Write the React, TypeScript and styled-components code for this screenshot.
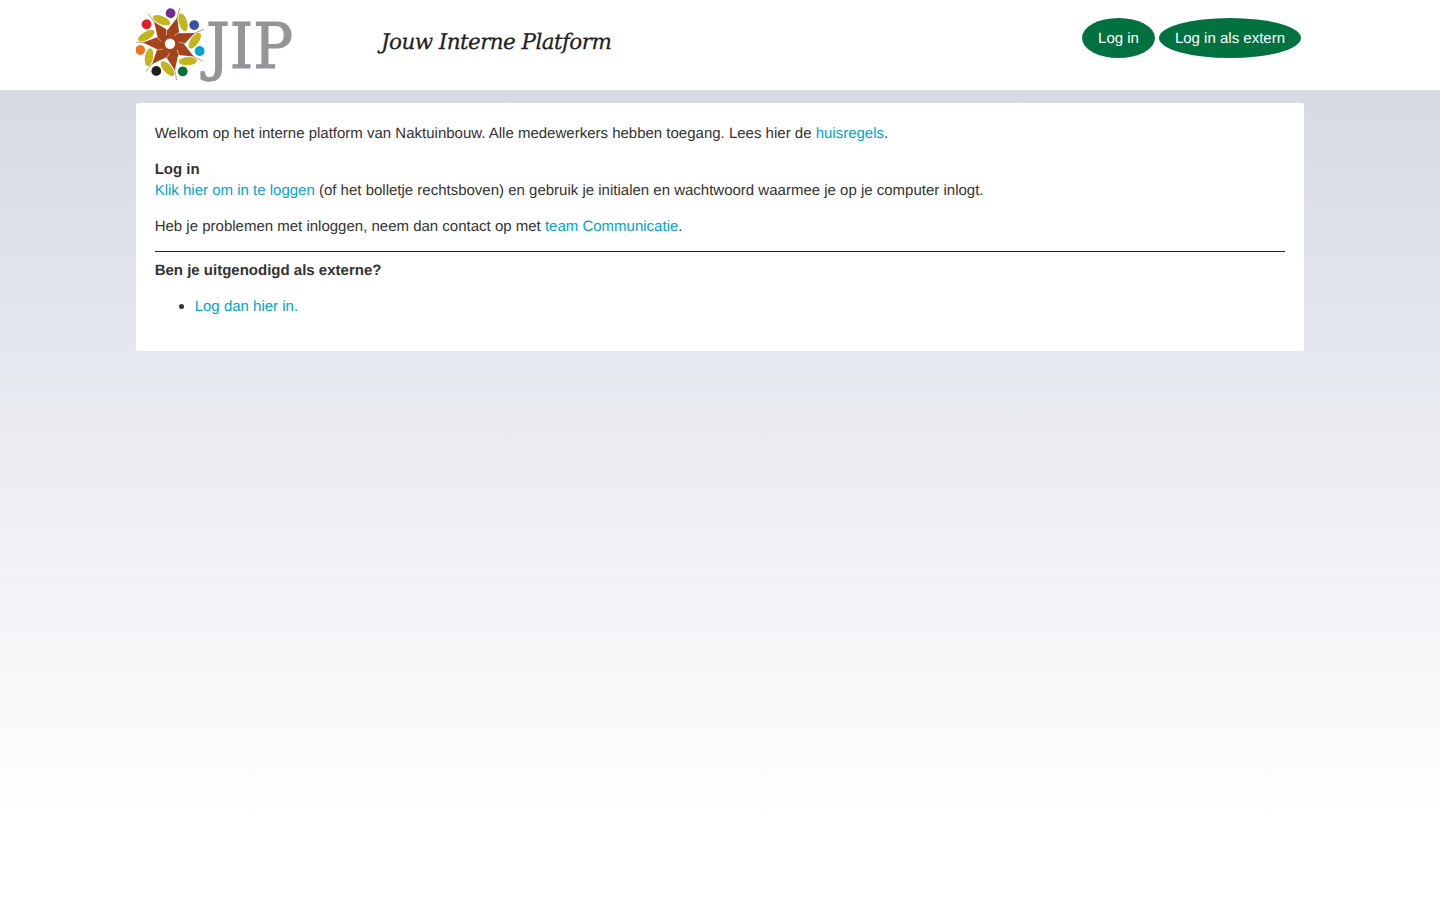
import React from "react";
import styled, { createGlobalStyle } from "styled-components";

const GlobalStyle = createGlobalStyle`
  html, body {
    margin: 0;
    min-height: 100%;
  }
  body {
    font-family: "Liberation Sans", Arial, sans-serif;
    font-size: 15px;
    line-height: 21px;
    color: #333333;
    background: #ffffff;
    text-rendering: geometricPrecision;
  }
`;

const Page = styled.div`
  height: 900px;
  overflow: hidden;
  background: linear-gradient(180deg, #d6dae4 90px, #ffffff 820px);
`;

const Header = styled.header`
  height: 90px;
  background: #ffffff;
`;

const HeaderInner = styled.div`
  width: 1168px;
  margin: 0 auto;
  display: flex;
  align-items: flex-start;
`;

const LogoMark = styled.svg`
  display: block;
  width: 175px;
  height: 90px;
  flex: none;
`;

const Tagline = styled.div`
  margin: 28px 0 0 70px;
  font-family: "DejaVu Serif", Georgia, serif;
  font-style: italic;
  font-size: 21.5px;
  line-height: 30px;
  color: #222222;
  letter-spacing: -0.58px;
  -webkit-text-stroke: 0.25px #222222;
  flex: 1;
`;

const ButtonRow = styled.div`
  display: flex;
  gap: 4px;
  margin: 18px 3px 0 0;
`;

const PillButton = styled.a`
  display: block;
  height: 40px;
  padding: 0 16px;
  line-height: 42px;
  border-radius: 50%;
  background: #027140;
  color: #ffffff;
  text-decoration: none;
`;

const Card = styled.main`
  box-sizing: border-box;
  width: 1168px;
  height: 248px;
  margin: 13px auto 0;
  padding: 20px 19px 0 18.7px;
  background: #ffffff;
  border-radius: 3px;
  box-shadow: 0 0 1px rgba(255, 255, 255, 0.6);
`;

const Para = styled.p`
  margin: 0 0 15px;
`;

const TextLink = styled.a`
  color: #00a5cf;
  text-decoration: none;
`;

const Rule = styled.hr`
  margin: -1px 0 8px;
  border: 0;
  border-top: 1px solid #222222;
`;

const List = styled.ul`
  margin: -1px 0 0;
  padding-left: 40px;
  text-rendering: auto;

  ${TextLink} {
    text-rendering: geometricPrecision;
  }
`;

const CX = 170;
const CY = 43.7;
const STEP = 360 / 7;
const rays = [0, 1, 2, 3, 4, 5, 6];
const dotColors = ["#6f2c91", "#3953a4", "#00a5cf", "#027140", "#231f20", "#ee7623", "#e21c2a"];

// seven-pointed star, outer and inner points in turn
const starPoints = Array.from({ length: 14 }, (_, i) => {
  const r = i % 2 === 0 ? 27 : 14;
  const a = ((-36 + (i * STEP) / 2) * Math.PI) / 180;
  return `${(CX + r * Math.sin(a)).toFixed(1)},${(CY - r * Math.cos(a)).toFixed(1)}`;
}).join(" ");

function Logo() {
  return (
    <LogoMark viewBox="136 0 175 90">
      {rays.map((i) => (
        <g key={i} transform={`rotate(${-36 + i * STEP} ${CX} ${CY})`}>
          <line x1={CX} y1={CY - 24} x2={CX} y2={CY - 37} stroke="#c58b70" strokeWidth="0.8" />
        </g>
      ))}
      <polygon points={starPoints} fill="#a5431a" />
      {rays.map((i) => (
        <g key={i} transform={`rotate(${-36 + i * STEP} ${CX} ${CY})`}>
          <line x1={CX + 2} y1={CY - 9} x2={CX + 7} y2={CY - 15} stroke="#ffffff" strokeWidth="0.7" opacity="0.7" />
        </g>
      ))}
      <circle cx={CX} cy={CY} r="5.2" fill="#ffffff" />
      {rays.map((i) => (
        <g key={i} transform={`rotate(${-20 + i * STEP} ${CX} ${CY})`}>
          <ellipse
            cx={CX}
            cy={CY - 25}
            rx="9.2"
            ry="4.1"
            fill="#c4b51f"
            transform={`rotate(42 ${CX} ${CY - 25})`}
          />
        </g>
      ))}
      {dotColors.map((c, i) => (
        <circle key={c} cx={CX} cy={CY - 30.5} r="4.9" fill={c} transform={`rotate(${1 + i * STEP} ${CX} ${CY})`} />
      ))}
      <text
        x="206"
        y="68"
        fontFamily="'DejaVu Serif', serif"
        fontSize="63"
        fill="#939598"
        stroke="#939598"
        strokeWidth="1.2"
        textLength="87"
        lengthAdjust="spacingAndGlyphs"
      >
        JIP
      </text>
    </LogoMark>
  );
}

export default function App() {
  return (
    <Page>
      <GlobalStyle />
      <Header>
        <HeaderInner>
          <Logo />
          <Tagline>Jouw Interne Platform</Tagline>
          <ButtonRow>
            <PillButton href="#">Log in</PillButton>
            <PillButton href="#">Log in als extern</PillButton>
          </ButtonRow>
        </HeaderInner>
      </Header>
      <Card>
        <Para>
          Welkom op het interne platform van Naktuinbouw. Alle medewerkers hebben toegang. Lees hier de{" "}
          <TextLink href="#">huisregels</TextLink>.
        </Para>
        <Para>
          <strong>Log in</strong>
          <br />
          <TextLink href="#">Klik hier om in te loggen</TextLink> (of het bolletje rechtsboven) en gebruik je initialen en wachtwoord waarmee je op je computer inlogt.
        </Para>
        <Para>
          Heb je problemen met inloggen, neem dan contact op met <TextLink href="#">team Communicatie</TextLink>.
        </Para>
        <Rule />
        <Para>
          <strong>Ben je uitgenodigd als externe?</strong>
        </Para>
        <List>
          <li>
            <TextLink href="#">Log dan hier in.</TextLink>
          </li>
        </List>
      </Card>
    </Page>
  );
}
